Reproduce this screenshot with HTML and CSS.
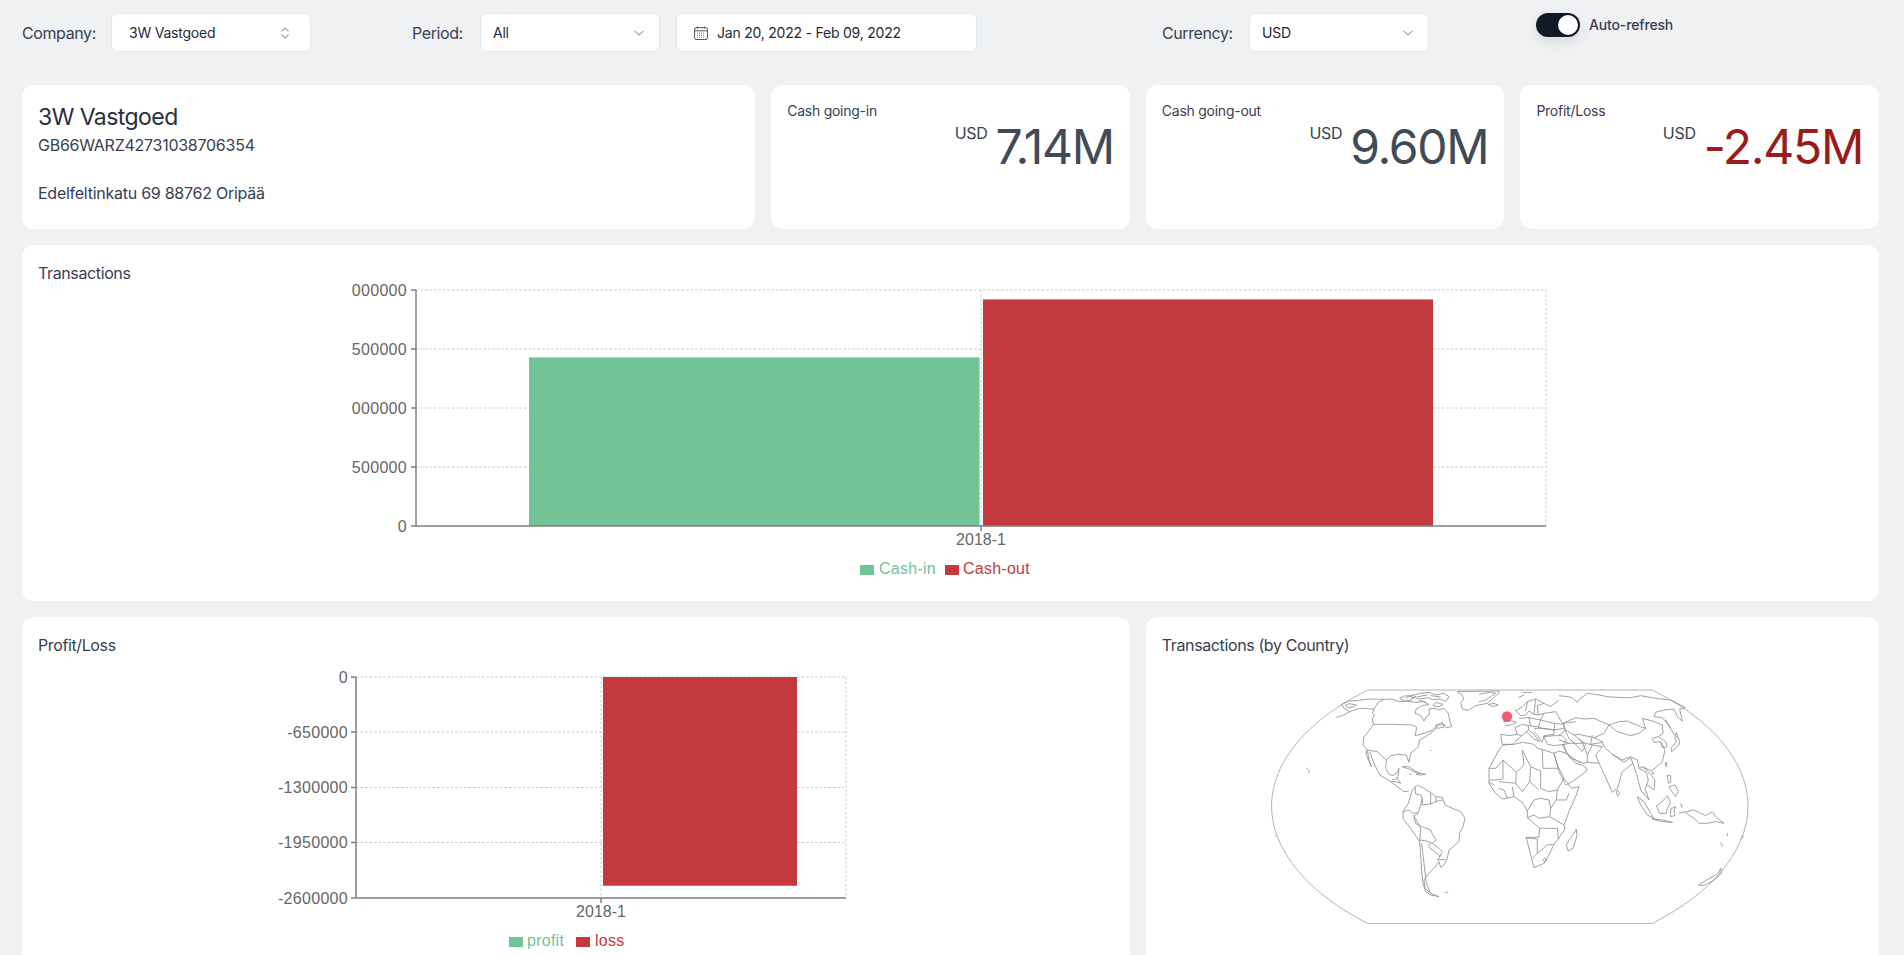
FILE: index.html
```html
<!DOCTYPE html>
<html lang="en">
<head>
  <meta charset="UTF-8" />
  <meta name="viewport" content="width=device-width, initial-scale=1.0" />
  <title>Dashboard</title>
  <link rel="stylesheet" href="styles.css">
</head>
<body>
  <main class="page">
    <div class="toolbar">
      <label class="field-label label-company">Company:</label>
      <div class="select select-company">
        <span>3W Vastgoed</span>
        <svg class="updown" viewBox="0 0 10 12"><path d="M1.5 4.5 5 1l3.500 3.500M1.500 7.500 5 11l3.500-3.500"/></svg>
      </div>
      <label class="field-label label-period">Period:</label>
      <div class="select select-period">
        <span>All</span>
        <svg class="chevron" viewBox="0 0 10 6"><path d="M.5.8 5 5 9.500.8"/></svg>
      </div>
      <div class="select select-date">
        <svg class="calendar" viewBox="0 0 14 14">
          <path d="M3.500.5v2M10.500.5v2"/>
          <rect x=".6" y="1.700" width="12.800" height="11.800" rx="1.500"/>
          <path d="M.6 4.800h12.800"/>
          <path class="calendar-dots" d="M3 7.200h8M3 9.200h8M3 11.200h8"/>
        </svg>
        <span>Jan 20, 2022 - Feb 09, 2022</span>
      </div>
      <label class="field-label label-currency">Currency:</label>
      <div class="select select-currency">
        <span>USD</span>
        <svg class="chevron" viewBox="0 0 10 6"><path d="M.5.8 5 5 9.500.8"/></svg>
      </div>
      <div class="refresh">
        <span class="toggle"><span class="knob"></span></span>
        <span class="refresh-text">Auto-refresh</span>
      </div>
    </div>

    <div class="grid">
      <section class="card card-info">
        <h1>3W Vastgoed</h1>
        <p>GB66WARZ42731038706354<br><br>Edelfeltinkatu 69 88762 Oripää</p>
      </section>
      <section class="card card-stat">
        <h3>Cash going-in</h3>
        <div class="stat"><span class="unit">USD</span><span class="value">7.14M</span></div>
      </section>
      <section class="card card-stat">
        <h3>Cash going-out</h3>
        <div class="stat"><span class="unit">USD</span><span class="value">9.60M</span></div>
      </section>
      <section class="card card-stat">
        <h3>Profit/Loss</h3>
        <div class="stat"><span class="unit">USD</span><span class="value value-loss">-2.45M</span></div>
      </section>

      <section class="card card-wide">
        <h2>Transactions</h2>
        <svg class="chart chart-large" viewBox="0 0 1200 300">
          <path class="split" d="M65 5H1195M65 64H1195M65 123H1195M65 182H1195M630 5V241M1195 5V241"/>
          <rect class="bar-in" x="178" y="72.400" width="450.500" height="168.600"/>
          <rect class="bar-out" x="632" y="14.400" width="450" height="226.600"/>
          <path class="axis" d="M65 5V241H1195M60 5H65M60 64H65M60 123H65M60 182H65M60 241H65M630 241V246"/>
          <text class="tick" x="56" y="11">000000</text>
          <text class="tick" x="56" y="70">500000</text>
          <text class="tick" x="56" y="129">000000</text>
          <text class="tick" x="56" y="188">500000</text>
          <text class="tick" x="56" y="247">0</text>
          <text class="tick-x" x="630" y="260">2018-1</text>
          <rect class="bar-in" x="509" y="280" width="14" height="10"/>
          <text class="legend-in" x="528" y="289">Cash-in</text>
          <rect class="bar-out" x="594" y="280" width="14" height="10"/>
          <text class="legend-out" x="612" y="289">Cash-out</text>
        </svg>
      </section>

      <section class="card card-three">
        <h2>Profit/Loss</h2>
        <svg class="chart chart-medium" viewBox="0 0 600 300">
          <path class="split" d="M80 20H570M80 75H570M80 130.500H570M80 185.500H570M325 20V241M570 20V241"/>
          <rect class="bar-out" x="327" y="20" width="194" height="208.700"/>
          <path class="axis" d="M80 20V241H570M75 20H80M75 75H80M75 130.500H80M75 185.500H80M75 241H80M325 241V246"/>
          <text class="tick" x="72" y="26">0</text>
          <text class="tick" x="72" y="81">-650000</text>
          <text class="tick" x="72" y="136">-1300000</text>
          <text class="tick" x="72" y="191">-1950000</text>
          <text class="tick" x="72" y="247">-2600000</text>
          <text class="tick-x" x="325" y="260">2018-1</text>
          <rect class="bar-in" x="233" y="280" width="14" height="10"/>
          <text class="legend-in" x="251" y="289">profit</text>
          <rect class="bar-out" x="300" y="280" width="14" height="10"/>
          <text class="legend-out" x="319" y="289">loss</text>
        </svg>
      </section>

      <section class="card card-two">
        <h2>Transactions (by Country)</h2>
        <!-- viewBox is in page pixels, outlines are traced region by region -->
        <svg class="chart chart-map" viewBox="1213 657 600 300">
          <path class="map-frame" d="M1369 690H1653C1710 718 1749 760 1749 806C1749 852 1710 895 1653 923.500H1369C1312 895 1272.600 852 1272.600 806C1272.600 760 1312 718 1369 690Z"/>
          <g class="map-land">
            <g transform="translate(1330 685) scale(.3333)">
              <path d="M22 97 45 90 62 80 45 70 38 58 58 48 85 47 110 43 135 42 165 43 148 52 135 72 130 85 137 90 130 100 133 118"/>
              <path d="M62 80 85 72 105 70 122 72 135 72M48 62 60 56 82 60 72 66 55 68Z"/>
              <path d="M165 43 190 42 210 50 235 48 258 52 285 50 300 58 280 62 262 72 258 85 275 92 285 108 292 95 302 88 300 72 318 70 330 75 345 70 358 85 362 105 368 125 352 128 345 118 325 122 310 135 285 145 258 152 262 135 262 125 250 120 190 118 133 118"/>
              <path d="M133 118 118 140 105 155 102 180 115 195 145 200 160 215 172 225 185 212 205 208 232 210 240 232 245 205 268 185 272 165 290 155 310 140 325 128"/>
              <path d="M115 195 120 225 127 245 113 212 111 197"/>
              <path d="M122 200 135 235 152 270 170 280 185 290 205 305 225 320 240 318"/>
              <path d="M172 225 170 250 180 268 192 272 205 262 210 250 208 268 205 280 190 285M205 280 215 295 200 290 185 290"/>
              <path d="M220 245 240 245 258 258 272 265 258 262 240 252ZM262 268 275 265 290 268 275 270ZM240 268H248"/>
              <path d="M212 40 225 48 245 46 255 38 275 42 300 38 310 44 335 42 350 50 360 35 345 25 320 30 300 22 270 26 245 32 225 33ZM230 38 255 32M265 35 295 30M305 32 335 36M320 52 342 58 330 66 312 62ZM245 40 262 34M270 46 290 52"/>
              <path d="M385 22 398 28 405 42 395 52 400 72 418 76 440 62 475 55 500 32 510 24 510 18 385 20Z"/>
              <path d="M304 196H308M318 122 340 112 345 126 328 130Z"/>
            </g>
            <g transform="translate(1390 780) scale(.3333)">
              <path d="M42 95 58 70 70 30 85 15 105 25 125 38 140 50 160 52 168 75 190 85 215 95 228 115 222 140 212 160 210 185 195 198 180 210 175 235 165 255 155 262 150 245 135 265 115 285 105 300 108 325 125 340 150 350 125 345 110 335 102 310 98 270 92 185 65 145 42 115Z"/>
              <path d="M42 95 60 90 72 100 88 98 95 75 100 55 95 45 80 42 78 20"/>
              <path d="M100 55 100 75 125 72 125 40M125 72 140 65 160 60M140 50 142 68"/>
              <path d="M72 105 85 125 95 145 92 185"/>
              <path d="M88 98 75 110 80 130 98 140 125 150 130 162 142 180 130 190 150 205 160 215 152 232 145 240 170 238"/>
              <path d="M92 180 108 182 125 188 130 190M125 190 118 200 150 225 152 232"/>
              <path d="M98 190 105 250 112 310 125 340"/>
              <path d="M168 337H178"/>
            </g>
            <g transform="translate(1480 685) scale(.3333)">
              <path d="M30 250 45 222 60 195 72 180 105 178 130 172 165 178 175 190 195 195 225 205 235 240 255 280 278 310 300 305 292 330 270 380 255 420 258 432 238 462 225 478 210 510 195 535 165 548 158 522 142 458 180 456 182 430 160 410 145 398 145 378 130 352 105 335 70 342 50 325 30 295Z"/>
              <path d="M30 250H50L72 225V282L50 285H30"/>
              <path d="M72 225 112 262 135 240 130 195M130 195 155 245 185 258M155 245 152 290 180 315"/>
              <path d="M112 262 110 295 60 290M110 295 130 320 152 290"/>
              <path d="M190 195 192 250H240M185 258V310L210 320 235 315 255 280"/>
              <path d="M235 315 232 345H262L270 325M232 345 215 370 212 395 255 420"/>
              <path d="M145 378 165 345 185 340 210 345 215 370M145 398 165 390 180 400 212 395M182 430H235L238 462"/>
              <path d="M140 458 175 462V505L205 480 225 478M175 505 160 520M60 310 75 315 85 340M100 305 105 335M45 300 30 292"/>
              <path d="M197 520a5 5 0 1 0 .1 0Z"/>
              <path d="M292 432 294 452 282 490 268 498 262 480 272 462 285 445Z"/>
              <path d="M65 148 90 152 115 148 128 153 108 170 100 178H70Z"/>
              <path d="M115 148 108 128 130 118 148 122V135L128 153"/>
              <path d="M72 110 85 108H100L112 112 95 120 78 122"/>
              <path d="M120 100 150 98 185 105 225 115 228 135 190 130 175 125 148 122M150 98 155 122M185 105 178 128"/>
              <path d="M148 135 165 148 182 170 165 162 150 148 140 138"/>
              <path d="M165 130H190L225 135V148L195 152 190 172 175 150 165 140"/>
              <path d="M195 155 225 152H250L262 165 255 178 225 182 205 178Z"/>
              <path d="M110 78 130 65 145 50 170 42 195 55 175 62 178 90 165 88 150 78 140 90 125 92ZM145 50 140 78M170 42 165 88"/>
              <path d="M185 105 195 85 178 90M195 55 215 65 240 45M195 85 230 80 250 115 290 110M225 135 255 130V118L225 115"/>
              <path d="M255 130 270 160 290 178M275 165 290 178 310 200 320 180 300 160"/>
              <path d="M225 205 240 198 262 205 290 235 300 238 310 240 325 252 318 262 280 290 260 300 240 260ZM255 178 262 205M262 205 305 235"/>
              <path d="M0 28 30 22 50 25 20 45 0 50M28 58 45 55 58 60 40 65ZM130 22H160M118 38 135 30"/>
            </g>
            <g transform="translate(1560 685) scale(.3333)">
              <path d="M0 32 25 35 40 38 55 52 62 42 85 25 120 30 145 35 190 38H215L245 32 290 40 335 45 380 68"/>
              <path d="M380 68 362 72 370 108 355 95 345 72 315 75 290 82 285 95 310 98 325 115 345 148 358 160M335 130 320 105"/>
              <path d="M338 200 360 180 362 170 352 142 348 155 352 172 336 188Z"/>
              <path d="M0 150 20 135 12 115 50 98 75 102 105 100 150 120 180 110 205 108 245 125 260 130 250 100 280 108 310 120 312 145"/>
              <path d="M20 135 45 150 60 148 105 158 135 145 150 120M150 120 175 140 215 152 240 145 260 130"/>
              <path d="M312 145 298 155 280 160 285 172 305 170 318 195 310 230 285 252 278 258M298 155 320 170 325 185 310 188 305 170"/>
              <path d="M278 258 250 245 240 250 235 225 215 215 190 225 160 208 135 185 130 170 105 158"/>
              <path d="M318 235 323 232 322 245ZM280 262 284 264 281 268Z"/>
              <path d="M45 150 70 172 100 180M100 150 95 178 130 172M0 165 30 175H70M30 175 10 180 35 220 75 235 85 232V210L70 172"/>
              <path d="M85 232 120 235 110 210 130 185 100 180 85 210"/>
              <path d="M120 235 130 255 160 322 175 310 190 260 222 235 215 218 195 232 160 208"/>
              <path d="M175 315 182 325 176 333 172 323Z"/>
              <path d="M222 235 235 275 245 315 270 345 258 310 265 300 285 315 288 285 268 260 250 245M240 250 262 262 268 285 262 300"/>
              <path d="M235 335 255 350 275 385 285 400 265 390 245 360ZM280 402 310 405 340 412 310 410Z"/>
              <path d="M292 362 305 355 325 332 335 352 325 370 322 385H302Z"/>
              <path d="M335 372 350 365 345 378 348 392 335 395Z"/>
              <path d="M325 270 335 272V292L328 295ZM330 305 348 300 358 320 350 335 340 322ZM365 355 370 370"/>
              <path d="M378 382 405 375 425 385 440 392 460 380 470 395 495 415 470 410 445 415H420L405 400ZM360 385 378 380"/>
            </g>
            <g transform="translate(1260 670) scale(.3317 .3333)">
              <path d="M142 293 152 303 150 310M48 495 52 500"/>
              <path d="M1325 645 1350 630 1385 610 1392 595 1395 610 1370 632 1340 647Z"/>
              <path d="M1412 490V498M1392 518 1398 530M1450 508 1462 498"/>
            </g>
          </g>
          <circle class="map-pin" cx="1508" cy="716.500" r="5.200"/>
        </svg>
      </section>
    </div>
  </main>
</body>
</html>
```

FILE: styles.css
```css
* {
  box-sizing: border-box;
}
html, body {
  height: 100%;
  margin: 0;
  overflow: hidden;
}
body {
  font-family: 'Inter', 'Liberation Sans', sans-serif;
  background: #f0f1f3;
  color: #374151;
}
.page {
  padding: 13px 25px 0 22px;
}

/* top filters */
.toolbar {
  display: flex;
  align-items: center;
  height: 39px;
  margin-bottom: 33px;
}
.field-label {
  font-size: 16px;
  letter-spacing: -.4px;
  color: #374151;
}
.label-company {
  width: 89px;
}
.label-period {
  width: 68px;
  margin-left: 101px;
}
.label-currency {
  width: 87px;
  margin-left: 185px;
}
.select {
  display: flex;
  align-items: center;
  justify-content: space-between;
  height: 39px;
  padding: 0 12px;
  background: #fff;
  border: 1px solid #e2e8f0;
  border-radius: 6px;
  font-size: 14px;
  letter-spacing: -.22px;
  color: #1f2937;
}
.select-company {
  width: 200px;
  padding: 0 20px 0 17px;
}
.select-period {
  width: 180px;
}
.select-date {
  width: 301px;
  margin-left: 16px;
  padding-left: 17px;
  justify-content: flex-start;
  gap: 9px;
}
.select-currency {
  width: 180px;
}
.updown {
  width: 10px;
  height: 12px;
  fill: none;
  stroke: #9ca3af;
  stroke-width: 1.1;
}
.chevron {
  width: 10px;
  height: 6px;
  margin-right: 3px;
  fill: none;
  stroke: #9ca3af;
  stroke-width: 1.1;
}
.calendar {
  width: 14px;
  height: 14px;
  fill: none;
  stroke: #4b5563;
  stroke-width: 1;
}
.calendar-dots {
  stroke-width: .8;
  stroke-dasharray: 1 1;
}
.refresh {
  display: flex;
  align-items: center;
  gap: 9px;
  height: 24px;
  margin-left: 107px;
  align-self: flex-start;
  font-size: 14px;
  font-weight: 500;
  letter-spacing: -.15px;
  color: #374151;
}
.refresh-text {
  padding-bottom: 2px;
}
.toggle {
  display: flex;
  justify-content: flex-end;
  align-items: center;
  width: 44px;
  height: 24px;
  padding: 0 2px;
  border-radius: 12px;
  background: #111827;
  box-shadow: 0 5px 12px rgba(0,0,0,0.1);
}
.knob {
  width: 20px;
  height: 20px;
  border-radius: 50%;
  background: #fff;
}

/* cards */
.grid {
  display: grid;
  grid-template-columns: repeat(5, 1fr);
  gap: 16px;
}
.card {
  background: #fff;
  border-radius: 12px;
  padding: 16px;
}
.card h2 {
  margin: 0;
  font-size: 16px;
  line-height: 24px;
  font-weight: 400;
  letter-spacing: -.38px;
}
.card h3 {
  margin: 0;
  font-size: 14px;
  line-height: 20px;
  font-weight: 400;
  letter-spacing: -.25px;
}
.card-info {
  grid-column: span 2;
  height: 144px;
}
.card-info h1 {
  margin: 0;
  font-size: 23px;
  line-height: 32px;
  font-weight: 400;
  letter-spacing: -.55px;
  color: #27303f;
}
.card-info p {
  margin: 0;
  font-size: 16px;
  line-height: 24px;
  letter-spacing: -.26px;
}
.card-stat {
  height: 144px;
}
.stat {
  display: flex;
  justify-content: flex-end;
  gap: 8px;
}
.unit {
  font-size: 16px;
  line-height: 24px;
  letter-spacing: -.3px;
}
.value {
  padding-top: 2px;
  font-size: 48px;
  line-height: 48px;
  letter-spacing: -1.3px;
  color: #414b57;
}
.value-loss {
  color: #991b1b;
}
.card-wide {
  grid-column: span 5;
}
.card-three {
  grid-column: span 3;
}
.card-two {
  grid-column: span 2;
}

/* charts */
.chart {
  display: block;
  height: 300px;
  margin: 0 auto;
  overflow: visible;
  font-family: 'Liberation Sans', sans-serif;
  font-size: 16px;
}
.chart-large {
  width: 1200px;
}
.chart-medium, .chart-map {
  width: 600px;
}
.split {
  fill: none;
  stroke: #c8c8c8;
  stroke-width: 1;
  stroke-dasharray: 2.5 2;
}
.axis {
  fill: none;
  stroke: #808080;
  stroke-width: 1.5;
}
.bar-in {
  fill: #72c395;
}
.bar-out {
  fill: #c4393d;
}
.tick {
  fill: #666;
  text-anchor: end;
  letter-spacing: .3px;
}
.tick-x {
  fill: #666;
  text-anchor: middle;
}
.legend-in {
  fill: #72c395;
  letter-spacing: .25px;
}
.legend-out {
  fill: #c4393d;
  letter-spacing: .25px;
}
.map-frame {
  fill: none;
  stroke: #a0a0a0;
  stroke-width: .8;
}
.map-land path {
  fill: none;
  stroke: #909090;
  stroke-width: .85;
  stroke-linejoin: round;
  vector-effect: non-scaling-stroke;
}
.map-pin {
  fill: #ec4452;
  fill-opacity: .85;
}
```
